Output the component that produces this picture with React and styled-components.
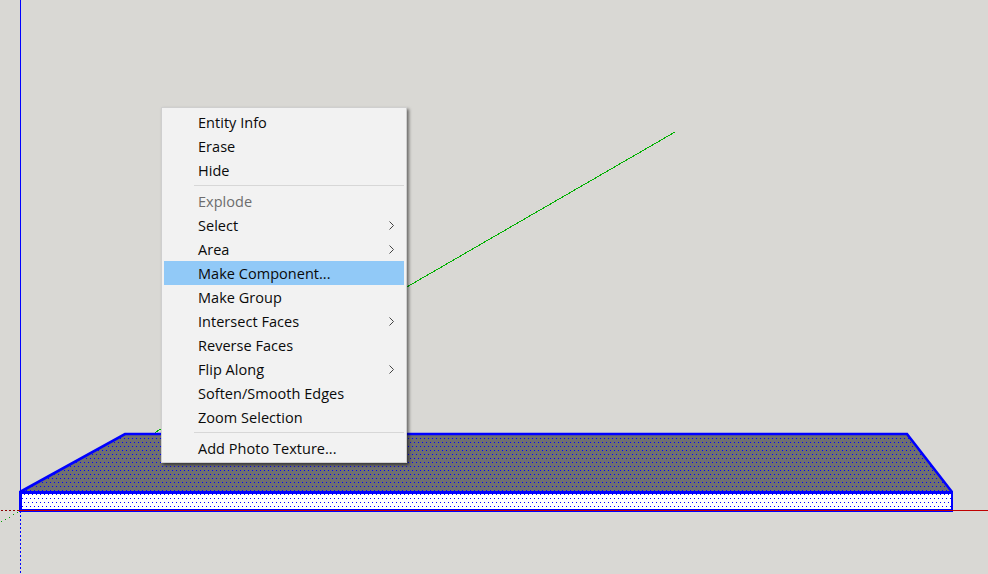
import React from "react";
import styled, { createGlobalStyle } from "styled-components";

const Global = createGlobalStyle`
  html, body { margin: 0; padding: 0; background: #d9d8d4; }
  #root { width: 988px; height: 574px; overflow: hidden; }
`;

const Viewport = styled.div`
  position: relative;
  width: 988px;
  height: 574px;
  background: #d9d8d4;
  overflow: hidden;
`;

const Scene = styled.svg`
  display: block;
  width: 988px;
  height: 574px;
`;

const Menu = styled.ul`
  position: absolute;
  left: 161px;
  top: 107px;
  width: 240px;
  margin: 0;
  padding: 2px;
  list-style: none;
  background: #f2f2f2;
  border: 1px solid #cfcfcf;
  box-shadow: 2px 2px 3px rgba(0, 0, 0, 0.5);
  font-family: "Open Sans", "Noto Sans", sans-serif;
  font-size: 14.5px;
  letter-spacing: 0.03px;
`;

const Item = styled.li`
  display: flex;
  align-items: center;
  justify-content: space-between;
  height: 24px;
  padding: 0 10px 0 34px;
  color: ${(p) => (p.$disabled ? "#6d6d6d" : "#0a0a0a")};
  background: ${(p) => (p.$active ? "#91c9f7" : "transparent")};
`;

const Separator = styled.li`
  height: 1px;
  margin: 3px 0 3px 30px;
  background: #d7d7d7;
`;

const Chevron = () => (
  <svg width="5" height="9" viewBox="0 0 5 9" fill="none" stroke="#444" strokeWidth="1">
    <path d="M0.5 0.5 L4.5 4.5 L0.5 8.5" />
  </svg>
);

const groups = [
  [["Entity Info"], ["Erase"], ["Hide"]],
  [
    ["Explode", { disabled: true }],
    ["Select", { sub: true }],
    ["Area", { sub: true }],
    ["Make Component...", { active: true }],
    ["Make Group"],
    ["Intersect Faces", { sub: true }],
    ["Reverse Faces"],
    ["Flip Along", { sub: true }],
    ["Soften/Smooth Edges"],
    ["Zoom Selection"],
  ],
  [["Add Photo Texture..."]],
];

const redDots = [1, 5, 9, 13, 17];
const greenDots = [
  [1, 521],
  [5, 519],
  [9, 517],
  [13, 514],
  [17, 512],
];

export default function App() {
  return (
    <Viewport>
      <Global />
      <Scene viewBox="0 0 988 574" shapeRendering="crispEdges">
        <defs>
          <pattern id="dots" width="4" height="8" patternUnits="userSpaceOnUse">
            <rect x="0" y="6" width="1" height="1" fill="#0000ff" />
            <rect x="2" y="2" width="1" height="1" fill="#0000ff" />
          </pattern>
        </defs>

        <line x1="20.5" y1="0" x2="20.5" y2="510" stroke="#0000ff" />
        <line x1="20.5" y1="511" x2="20.5" y2="574" stroke="#0000ff" strokeDasharray="2 2" />
        {redDots.map((x) => (
          <rect key={x} x={x} y="510" width="2" height="1" fill="#8b0000" />
        ))}
        {greenDots.map(([x, y]) => (
          <rect key={x} x={x} y={y} width="1" height="1" fill="#00a000" />
        ))}
        <line x1="155" y1="432.5" x2="675" y2="132" stroke="#00b000" />

        <polygon points="21,492 125,434 907,434 951,492" fill="#707070" />
        <polygon points="21,492 125,434 907,434 951,492" fill="url(#dots)" />
        <rect x="21" y="493" width="930" height="17" fill="#ffffff" />
        <rect x="21" y="493" width="930" height="17" fill="url(#dots)" />

        <polyline points="20,492 125,434 907,434 952,492" fill="none" stroke="#0000ff" strokeWidth="2.6" shapeRendering="auto" />
        <rect x="19" y="491" width="3" height="21" fill="#0000ff" />
        <rect x="951" y="491" width="2" height="21" fill="#0000ff" />
        <rect x="19" y="491" width="934" height="3" fill="#0000ff" />
        <rect x="19" y="509" width="934" height="3" fill="#0000ff" />
        <rect x="19" y="510" width="969" height="1" fill="#c00000" />
      </Scene>

      <Menu>
        {groups.map((group, i) => (
          <React.Fragment key={i}>
            {i > 0 && <Separator />}
            {group.map(([label, o = {}]) => (
              <Item key={label} $disabled={o.disabled} $active={o.active}>
                <span>{label}</span>
                {o.sub && <Chevron />}
              </Item>
            ))}
          </React.Fragment>
        ))}
      </Menu>
    </Viewport>
  );
}
